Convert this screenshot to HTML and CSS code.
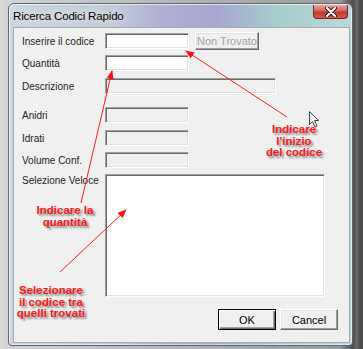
FILE: index.html
```html
<!DOCTYPE html>
<html lang="it">

<head>
    <meta charset="UTF-8">
    <title>Ricerca Codici Rapido</title>
    <link rel="stylesheet" href="styles.css">
</head>

<body>
    <div class="desktop">
        <div class="window">
            <div class="titlebar">
                <span class="title">Ricerca Codici Rapido</span>
                <span class="close">
                    <svg width="14" height="10" viewBox="0 0 14 10">
                        <path d="M3 1 L11 9 M11 1 L3 9" stroke="#3a1a18" stroke-width="4" stroke-linecap="round" />
                        <path d="M3 1 L11 9 M11 1 L3 9" stroke="#ffffff" stroke-width="2" stroke-linecap="round" />
                    </svg>
                </span>
            </div>

            <div class="client">
                <div class="row first">
                    <span class="label">Inserire il codice</span>
                    <span class="box"></span>
                    <span class="btn disabled">Non Trovato</span>
                </div>
                <div class="row gap5">
                    <span class="label">Quantità</span>
                    <span class="box"></span>
                </div>
                <div class="row gap7">
                    <span class="label">Descrizione</span>
                    <span class="box off wide"></span>
                </div>
                <div class="row gap13">
                    <span class="label">Anidri</span>
                    <span class="box off"></span>
                </div>
                <div class="row gap7">
                    <span class="label">Idrati</span>
                    <span class="box off"></span>
                </div>
                <div class="row gap6">
                    <span class="label">Volume Conf.</span>
                    <span class="box off"></span>
                </div>
                <div class="row gap6 top">
                    <span class="label">Selezione Veloce</span>
                    <span class="box list"></span>
                </div>
                <div class="actions">
                    <span class="btn default">OK</span>
                    <span class="btn">Cancel</span>
                </div>
            </div>
        </div>

        <!-- annotazioni sopra la finestra -->
        <svg class="arrows" width="363" height="349" viewBox="0 0 363 349">
            <defs>
                <marker id="head" markerWidth="9" markerHeight="7" refX="8" refY="3.5" orient="auto" markerUnits="userSpaceOnUse">
                    <path d="M0 0 L9 3.5 L0 7 Z" fill="#ff1010" />
                </marker>
            </defs>
            <line x1="287" y1="117" x2="186" y2="51" stroke="#ff2020" stroke-width="1" marker-end="url(#head)" />
            <line x1="81" y1="203" x2="112" y2="71" stroke="#ff2020" stroke-width="1" marker-end="url(#head)" />
            <line x1="60" y1="272" x2="126" y2="210" stroke="#ff2020" stroke-width="1" marker-end="url(#head)" />
            <path class="pointer" d="M309.5 111.5 L309.5 124.5 L312.5 121.5 L315 127 L317 126 L314.5 120.5 L318.5 120.5 Z" fill="#f4f4f4" stroke="#404040" stroke-width="1" />
        </svg>

        <div class="note n1">Indicare<br>l'inizio<br>del codice</div>
        <div class="note n2">Indicare la<br>quantità</div>
        <div class="note n3">Selezionare<br>il codice tra<br>quelli trovati</div>
    </div>
</body>

</html>
```

FILE: styles.css
```css
/* General Styles */
body {
    margin: 0;
    padding: 0;
    font-family: "Liberation Sans", Arial, sans-serif;
    overflow: hidden;
}

.desktop {
    position: relative;
    width: 363px;
    height: 349px;
    padding-top: 3px;
    box-sizing: border-box;
    background: linear-gradient(to right, #dcdcdc 0, #d2d2d2 8px, #9a9a9a 340px, #4c4c4c 353px, #6a6a6a 357px, #4a4a4a 360px);
}

/* Window frame */
.window {
    display: flex;
    flex-direction: column;
    width: 345px;
    height: 343px;
    margin-left: 8px;
    box-sizing: border-box;
    border: 1px solid #5b6670;
    border-radius: 6px 6px 4px 4px;
    padding: 0 2px 2px 4px;
    background: linear-gradient(to right, #cdd6de 0, #c3ccd6 30%, #aeb0d2 45%, #a6a6d0 60%, #a8cccd 78%, #bcd8da 100%);
    box-shadow: inset 1px 1px 0 rgba(255, 255, 255, 0.7), inset -1px -1px 0 rgba(255, 255, 255, 0.5);
}

.titlebar {
    display: flex;
    align-items: flex-start;
    justify-content: space-between;
    height: 23px;
}

.title {
    margin-top: 6px;
    font-size: 11.5px;
    letter-spacing: -0.15px;
    color: #000;
    text-shadow: 0 0 6px rgba(255, 255, 255, 0.9);
}

.close {
    display: flex;
    align-items: center;
    justify-content: center;
    width: 33px;
    height: 13px;
    margin-top: 1px;
    margin-right: 2px;
    border: 1px solid #6e2a24;
    border-top: none;
    border-radius: 0 0 4px 4px;
    background: linear-gradient(to bottom, #e8a59e 0, #d4665d 45%, #c1392e 55%, #d25a4c 100%);
}

/* Client area */
.client {
    flex: 1;
    border: 1px solid #a3adb6;
    background-color: #f0f0f0;
    padding: 4px 11px 0 8px;
    font-size: 10px;
    color: #1e1e1e;
}

.row {
    display: flex;
    align-items: center;
}

.row.first {
    height: 18px;
}

.row.top {
    align-items: flex-start;
}

.row.top .label {
    margin-top: 0;
    line-height: 13px;
}

.gap5 { margin-top: 5px; }
.gap6 { margin-top: 6px; }
.gap7 { margin-top: 7px; }
.gap13 { margin-top: 13px; }

.label {
    width: 83px;
    flex-shrink: 0;
}

.box {
    display: block;
    width: 84px;
    height: 16px;
    box-sizing: border-box;
    background-color: #fff;
    border: 1px solid;
    border-color: #a0a0a0 #ffffff #ffffff #a0a0a0;
    box-shadow: inset 1px 1px 0 #696969, inset -1px -1px 0 #e3e3e3;
}

.box.off {
    background-color: #f0f0f0;
}

.box.wide {
    width: 171px;
}

.box.list {
    width: 220px;
    height: 123px;
}

/* Buttons */
.btn {
    display: flex;
    align-items: center;
    justify-content: center;
    box-sizing: border-box;
    background-color: #f0f0f0;
    border: 1px solid;
    border-color: #ffffff #696969 #696969 #ffffff;
    box-shadow: inset -1px -1px 0 #a0a0a0, inset 1px 1px 0 #e3e3e3;
    font-size: 11px;
    color: #000;
}

.btn.disabled {
    width: 64px;
    height: 18px;
    margin-left: 6px;
    color: #a3a3a3;
}

.btn.default {
    border: 1px solid #000;
    box-shadow: inset 1px 1px 0 #ffffff, inset -1px -1px 0 #696969, inset -2px -2px 0 #a0a0a0;
}

.actions {
    display: flex;
    justify-content: flex-end;
    gap: 4px;
    margin-top: 12px;
}

.actions .btn {
    width: 58px;
    height: 21px;
}

/* Annotations */
.arrows {
    position: absolute;
    left: 0;
    top: 0;
}

.note {
    position: absolute;
    width: 76px;
    text-align: center;
    font-size: 11.5px;
    line-height: 11.5px;
    font-weight: bold;
    color: #ff1a1a;
    text-shadow: 2px 2px 2px rgba(0, 0, 0, 0.45);
}

.n1 {
    left: 256px;
    top: 124px;
}

.n2 {
    left: 27px;
    top: 205px;
}

.n3 {
    left: 13px;
    top: 285px;
}
```
